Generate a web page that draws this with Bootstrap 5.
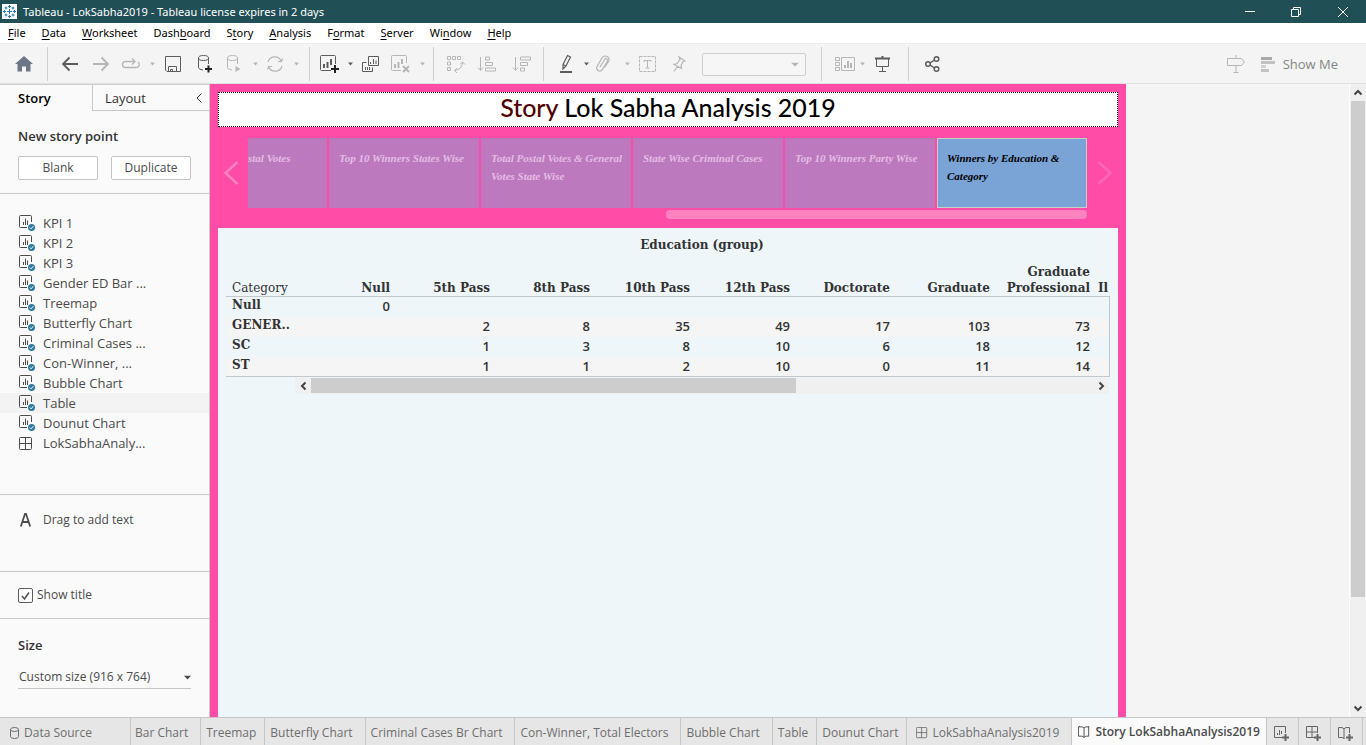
<!DOCTYPE html>
<html lang="en">
<head>
<meta charset="utf-8">
<meta name="viewport" content="width=device-width, initial-scale=1">
<title>Tableau - LokSabha2019</title>
<link rel="stylesheet" href="https://cdn.jsdelivr.net/npm/bootstrap@5.3.0/dist/css/bootstrap.min.css">
<style>
  body { font: 12px/16px "Open Sans", sans-serif; color: #4b4b4b; background: #f4f4f4; }
  svg { display: block; flex: none; overflow: visible; }
  .ln { fill: none; stroke: currentColor; }
  button { color: inherit; background: none; border: 0; padding: 0; }
  a { color: inherit; text-decoration: none; }

  .app-title { height: 23px; background: #205056; color: #fff; font: 11px/16px "Noto Sans", sans-serif; padding: 0 2px; gap: 6px; }
  .app-title button { width: 40px; height: 23px; display: flex; align-items: center; justify-content: center; }
  .app-title button:last-child { width: 42px; }
  .app-menu { height: 20px; background: #fff; color: #000; font: 11px/20px "Noto Sans", sans-serif; }
  .app-menu u { text-underline-offset: 2px; }

  .app-tools { height: 41px; border-bottom: 1px solid #e0e0e0; color: #5c5c5c; padding-top: 4px; padding-bottom: 3px; border-top: 1px solid #ededed; }
  .tool-group { height: 34px; display: flex; align-items: center; border-right: 1px solid #cfcfcf; padding: 0 6px; }
  .tool-wide { padding: 0 10px; }
  .tool-btn { width: 31px; height: 32px; display: flex; align-items: center; justify-content: center; }
  .tool-drop { width: 41px; height: 32px; display: flex; align-items: center; justify-content: space-between; padding: 0 2px 0 5px; }
  .tool-slim { width: 37px; }
  .tool-off { color: #b6b6b6; }
  .tool-select { width: 104px; height: 23px; border: 1px solid #cfcfcf; border-radius: 2px; background: #f6f6f6; appearance: none; }
  .fit-caret { margin: 0 12px 0 -15px; }
  .show-me { font-size: 13px; color: #858585; margin-right: 28px; }

  .side { width: 210px; background: #fafafa; border-right: 1px solid #c8c8c8; }
  .side-sect { border-bottom: 1px solid #c8c8c8; padding: 0 18px; }
  .side-new { padding-top: 17px; padding-bottom: 13px; }
  .side-tabs { height: 27px; font-size: 13px; color: #333; border-top: 1px solid #d0d0d0; }
  .side-tabs .tab-on { width: 92px; padding-left: 18px; font-weight: 600; color: #000; }
  .side-tabs .tab-off { border-left: 1px solid #c8c8c8; border-bottom: 1px solid #c8c8c8; padding: 0 7px 0 12px; }
  .side h2 { font-size: 13px; line-height: 16px; font-weight: 600; color: #333; margin: 0; }
  .side-btn { height: 24px; border: 1px solid #c4c4c4; border-radius: 2px; background: #fff; width: 80px; }
  .sheet-list { padding: 19px 0 41px; font-size: 13px; }
  .sheet-list a { height: 20px; padding-left: 19px; gap: 7px; display: flex; align-items: center; white-space: nowrap; }
  .sheet-list a.sheet-hot { background: #f3f3f3; }
  .side-text { height: 77px; padding: 17px 20px; gap: 11px; }
  .side-check { height: 47px; }
  .tick { appearance: none; width: 15px; height: 15px; margin: 0; border: 1px solid #5c5c5c; border-radius: 2px; background: #fff url("data:image/svg+xml,%3Csvg xmlns='http://www.w3.org/2000/svg' viewBox='0 0 13 13'%3E%3Cpath d='M3 7l2.5 3L10 3.500' fill='none' stroke='%23555' stroke-width='1.600'/%3E%3C/svg%3E"); }
  .side-size { padding: 18px 18px 0; }
  .size-select { width: 100%; height: 24px; border: 0; border-bottom: 1px solid #c4c4c4; background: none; appearance: none; color: inherit; font: inherit; padding: 0 0 0 1px; }

  .story { width: 916px; background: #ff4ca6; padding: 8px 8px 0; }
  .story-title { height: 35px; background: #fff; border: 1px dotted #000; color: #000; font: 500 25px/28px Lato, sans-serif; margin: 0; text-align: center; }
  .story-title span { color: #500000; }
  .points-nav { height: 101px; padding-top: 11px; }
  .points-arrow { width: 30px; height: 70px; color: #ff82c0; display: flex; align-items: center; justify-content: center; }
  .points-row { height: 71px; gap: 2px; margin-right: 1px; }
  .point { height: 70px; flex: 0 0 150px; background: #bd79bd; color: #e3bde3; font: italic bold 11px/18px "Liberation Serif", serif; padding: 11px 6px 11px 10px; text-align: left; }
  .point-cut { flex: 1 1 0; padding: 11px 0; }
  .point-on { background: #7aa3d6; border: 1px solid #c6cfc6; color: #000; padding: 10px 9px; }
  .points-bar { height: 9px; width: 421px; border-radius: 4px; background: #ff82c0; margin: 1px 1px 0 auto; }
  .view { background: #eef6fa; padding: 5px 8px 0; }

  .cross { table-layout: fixed; width: 100%; border-collapse: separate; border-spacing: 0; color: #333; font: bold 12px/16px "DejaVu Serif", serif; }
  .cross th, .cross td { padding: 0 4px; text-align: right; overflow: hidden; height: 20px; vertical-align: top; }
  .cross td { font: 600 13px/19px "Open Sans", sans-serif; }
  .cross thead th { vertical-align: bottom; }
  .cross .corner { font-weight: normal; }
  .cross .dim, .cross tbody th { text-align: left; padding-left: 6px; padding-right: 0; white-space: nowrap; }
  .cross thead .group-head { text-align: center; height: 16px; }
  .cross .col-heads th { height: 44px; border-bottom: 1px solid #c4c8ca; }
  .cross .name-col { width: 68px; }
  .cross .num-col { width: 100px; }
  .cross tbody tr:nth-child(even) { background: #f5f5f5; }
  .cross tbody td:last-child { border-right: 1px solid #c4c8ca; }
  .cross tbody tr:last-child > * { border-bottom: 1px solid #c4c8ca; }
  .cross-bar { margin: 1px 1px 0 69px; height: 16px; background: #f0f0f0; color: #444; }
  .cross-bar .grip { width: 485px; background: #cdcdcd; height: 15px; }
  .bar-end { width: 16px; height: 15px; display: flex; align-items: center; justify-content: center; }
  .page-bar { width: 17px; background: #f0f0f0; border-left: 1px solid #fff; color: #444; }
  .page-bar .grip { height: 496px; background: #cdcdcd; margin: 0 1px; }
  .page-bar .bar-end { height: 17px; }

  .sheet-tabs { height: 28px; background: #e6e6e6; border-top: 1px solid #c6c6c6; color: #6e6e6e; white-space: nowrap; }
  .sheet-tabs > * { display: flex; align-items: center; border-right: 1px solid #c6c6c6; padding: 3px 8px 0 5px; }
  .sheet-tabs .wide { padding: 3px 12px 0 5px; }
  .sheet-tabs .source { padding: 3px 38px 0 10px; gap: 5px; }
  .sheet-tabs .sheet-on { background: #fafafa; font-weight: 600; color: #4b4b4b; padding: 0 6px; gap: 4px; }
  .sheet-tabs .add { width: 32px; justify-content: center; padding: 4px 0 0; color: #666; }
</style>
</head>
<body class="vh-100 d-flex flex-column overflow-hidden">

<svg width="0" height="0" class="position-absolute" aria-hidden="true">
  <defs>
    <symbol id="sheet" viewBox="0 0 17 16"><path class="ln" d="M12.500 7V1.500q0-1-1-1h-10q-1 0-1 1v10q0 1 1 1H8M4.500 10V7M6.500 10V3.500M8.500 10V5.500"/><circle cx="12.500" cy="12.500" r="3.500" fill="#2f7a9e"/><path d="M10.800 12.500l1.300 1.300 2.200-2.600" fill="none" stroke="#fff"/></symbol>
    <symbol id="dash" viewBox="0 0 14 14"><path class="ln" d="M1.500.5h10q1 0 1 1v10q0 1-1 1h-10q-1 0-1-1v-10q0-1 1-1zM6.500.5v12M.5 6.500h12"/></symbol>
    <symbol id="book" viewBox="0 0 14 14"><path class="ln" d="M6.500 3q-.5-1.500-2-1.500h-3V.5M6.500 3Q7 1.500 8.500 1.500h3V.5M6.500 3v10M1.500 1.500h-1v10H4q2 0 2.500 1.500Q7 11.500 9 11.500h2.500v-10"/></symbol>
    <symbol id="caret" viewBox="0 0 5 4"><path d="M0 .5h5L2.500 3.500z" fill="currentColor"/></symbol>
  </defs>
</svg>

<header class="app-title d-flex align-items-center flex-shrink-0">
  <svg width="15" height="15" viewBox="0 0 15 15"><path d="M0 0h15v15H0z" fill="#fff"/><path d="M7.500 5v5M5 7.500h5M7.500 1v3M6 2.500h3M7.500 11v3M6 12.500h3M1 7.500h3M2.500 6v3M11 7.500h3M12.500 6v3M4 2.500v3M2.500 4h3M11 2.500v3M9.500 4h3M4 9.500v3M2.500 11h3M11 9.500v3M9.500 11h3" stroke="#2b7ba8" fill="none"/></svg>
  <span class="flex-grow-1">Tableau - LokSabha2019 - Tableau license expires in 2 days</span>
  <button aria-label="Minimize"><svg class="ln" width="10" height="10"><path d="M0 4.500h10"/></svg></button>
  <button aria-label="Restore"><svg class="ln" width="10" height="10"><path d="M.5 2.500h7v7h-7zM2.500 2V.5h7v7H8"/></svg></button>
  <button aria-label="Close"><svg class="ln" width="10" height="10"><path d="M0 0l10 10M10 0L0 10"/></svg></button>
</header>

<nav class="app-menu d-flex gap-3 px-2 flex-shrink-0">
  <a href="#"><u>F</u>ile</a><a href="#"><u>D</u>ata</a><a href="#"><u>W</u>orksheet</a><a href="#">Dash<u>b</u>oard</a><a href="#">S<u>t</u>ory</a><a href="#"><u>A</u>nalysis</a><a href="#">F<u>o</u>rmat</a><a href="#"><u>S</u>erver</a><a href="#">Wi<u>n</u>dow</a><a href="#"><u>H</u>elp</a>
</nav>

<div class="app-tools d-flex align-items-center flex-shrink-0" role="toolbar">
  <div class="tool-group px-2">
    <button class="tool-btn" aria-label="Home"><svg width="18" height="16"><path d="M9 0l9 8h-2.500v7.500h-4.500v-5H7v5H2.500V8H0z" fill="#6b7686"/></svg></button>
  </div>
  <div class="tool-group pe-2">
    <button class="tool-btn" aria-label="Back"><svg class="ln" width="16" height="14" stroke-width="1.800"><path d="M16 7H1M7.500.5L1 7l6.500 6.500"/></svg></button>
    <button class="tool-btn tool-off" aria-label="Forward"><svg class="ln" width="16" height="14" stroke-width="1.800"><path d="M0 7h15M8.500.5L15 7l-6.500 6.500"/></svg></button>
    <button class="tool-drop tool-off" aria-label="Redo"><svg class="ln" width="20" height="12" stroke-width="1.300"><path d="M14 3.500H4.500a3 3 0 000 6h11a3 3 0 001.500-5.500M11 .5l3 3-3 3"/></svg><svg width="5" height="4"><use href="#caret"/></svg></button>
    <button class="tool-btn" aria-label="Save"><svg class="ln" width="16" height="16"><path d="M.5.500h15v15H2L.5 14zM3.500 15.500v-5h8v5M5.500 15.500v-2h2v2"/></svg></button>
    <button class="tool-btn" aria-label="New data source"><svg class="ln" width="14" height="18"><ellipse cx="6.500" cy="3" rx="5" ry="2.500"/><path d="M1.500 3v9.500q0 2 4.500 2.500M11.500 3v6"/><path d="M11.500 10.500v7M8 14h7" stroke="#222" stroke-width="2"/></svg></button>
    <button class="tool-drop tool-off" aria-label="Pause updates"><svg class="ln" width="18" height="18"><ellipse cx="8.500" cy="3" rx="5" ry="2.500"/><path d="M3.500 3v9.500q0 2 4.500 2.500M13.500 3v6"/><path d="M11.500 11v6l5-3z" fill="currentColor" stroke="none"/></svg><svg width="5" height="4"><use href="#caret"/></svg></button>
    <button class="tool-drop tool-off" aria-label="Run update"><svg class="ln" width="18" height="16" stroke-width="1.200"><path d="M3 6a7 7 0 0113.500 0M17 10A7 7 0 013.500 10M13 5.500h3.500l1-3M7 10.500H3.500l-1 3"/></svg><svg width="5" height="4"><use href="#caret"/></svg></button>
  </div>
  <div class="tool-group ps-1">
    <button class="tool-drop" aria-label="New worksheet"><svg class="ln" width="19" height="18"><path d="M16.500 9V1.500q0-1-1-1h-13q-1 0-1 1v13q0 1 1 1H12"/><path d="M5 13v-4M8.500 13V7M12 10V4" stroke-width="2"/><path d="M16 10v8M12 14h8" stroke="#222" stroke-width="2"/></svg><svg width="5" height="4"><use href="#caret"/></svg></button>
    <button class="tool-btn" aria-label="Duplicate"><svg class="ln" width="17" height="16"><path d="M6.500.5h10v9h-10zM4.500 6.500h-4v9h10v-4M8.500 8V6M11.500 8V3M14 8V4.500M3.500 14v-3M5.500 14v-3M7.500 14v-3"/></svg></button>
    <button class="tool-drop tool-off" aria-label="Clear sheet"><svg class="ln" width="19" height="18"><path d="M15.500 8V1.500q0-1-1-1h-13q-1 0-1 1v13q0 1 1 1H10"/><path d="M4 13v-4M7.500 13V7M11 9V4" stroke-width="2"/><path d="M12 11l6 6M18 11l-6 6" stroke-width="2"/></svg><svg width="5" height="4"><use href="#caret"/></svg></button>
  </div>
  <div class="tool-group tool-off">
    <button class="tool-btn" aria-label="Swap rows and columns"><svg class="ln" width="18" height="17"><path d="M.5.500h3v3h-3zM5.500.500h3v3h-3zM10.500.500h3v3h-3zM.5 6h3v3h-3zM.5 11.500h3v3h-3zM15.500 6q0 7.500-8 8.500M13 8.500L15.500 6l2.500 2.500M10 12l-2.500 2.500L10 17"/></svg></button>
    <button class="tool-btn" aria-label="Sort ascending"><svg class="ln" width="18" height="16"><path d="M2.500 1v13M0 11.500l2.500 3 2.500-3M7.500 1h4v3h-4zM7.500 6.500h7v3h-7zM7.500 12h10v3h-10z"/></svg></button>
    <button class="tool-btn ms-1" aria-label="Sort descending"><svg class="ln" width="18" height="16"><path d="M2.500 1v13M0 11.500l2.500 3 2.500-3M7.500 1h10v3h-10zM7.500 6.500h7v3h-7zM7.500 12h4v3h-4z"/></svg></button>
  </div>
  <div class="tool-group tool-wide">
    <button class="tool-drop tool-slim" aria-label="Highlight"><svg class="ln" width="14" height="18"><path d="M4 9.500L8.500.5l3 1.500L7 11l-3 3zM4 9.500L7 11" stroke-width="1.200"/><path d="M1 17h12" stroke-width="2"/></svg><svg width="5" height="4"><use href="#caret"/></svg></button>
    <button class="tool-drop tool-off" aria-label="Group"><svg class="ln" width="14" height="16" stroke-width="1.200"><path d="M4 11l5-8q1-1.500 2 0t0 3l-5 8q-2 2-4 .5t-1-4l5-8.500q2-3 5-1.500t1.500 5l-4 6"/></svg><svg width="5" height="4"><use href="#caret"/></svg></button>
    <button class="tool-btn tool-off" aria-label="Show mark labels"><svg class="ln" width="17" height="16"><path d="M.5.500h16v15H.5z" stroke-dasharray="3 1"/><path d="M5 6V4.500h7V6M8.500 4.500v7.500M6.500 12h4"/></svg></button>
    <button class="tool-btn tool-off" aria-label="Fix axes"><svg class="ln" width="14" height="16" stroke-width="1.200"><path d="M7 1l6 4-2 .5-2 4 .5 3L2 8.500l3-1 3-4zM5.500 10.500L2 15.500"/></svg></button>
    <select class="tool-select ms-2" aria-label="Fit" disabled></select>
    <svg class="tool-off fit-caret" width="8" height="5" viewBox="0 0 5 4" preserveAspectRatio="none"><use href="#caret"/></svg>
  </div>
  <div class="tool-group tool-wide ps-2">
    <button class="tool-drop tool-slim tool-off" aria-label="Show cards"><svg class="ln" width="20" height="15"><path d="M.5.500h4v3h-4zM.5 5.500h4v3h-4zM.5 10.500h4v3h-4zM6.500.500h13v13h-13z"/><path d="M10 11V8M13 11V4M16 11V6" stroke-width="2"/></svg><svg width="5" height="4"><use href="#caret"/></svg></button>
    <button class="tool-btn" aria-label="Presentation mode"><svg class="ln" width="17" height="16"><path d="M1 2.500h15M8.500 0v2" stroke-width="2"/><path d="M2.500 3v7.500h12V3M8.500 10.500v5M5 15.500h7"/></svg></button>
  </div>
  <button class="tool-btn ms-2" aria-label="Share"><svg class="ln" width="15" height="16" stroke-width="1.500"><circle cx="3" cy="8" r="2.300"/><circle cx="11.500" cy="3" r="2.300"/><circle cx="11.500" cy="13" r="2.300"/><path d="M5 7l4.500-3M5 9l4.500 3"/></svg></button>
  <button class="ms-auto me-3 tool-off" aria-label="Guide"><svg class="ln" width="18" height="18"><path d="M.5 3.500h14l3 3.500-3 3.500H.5zM9 0v3.500M9 10.500v7M6.500 17.500h5"/></svg></button>
  <button class="show-me d-flex align-items-center gap-2"><svg width="14" height="15"><path d="M0 0h11v3H0z" fill="#a8a8a8"/><path d="M0 4h14v3H0zM0 12h8v3H0z" fill="#c2c2c2"/><path d="M0 8h5v3H0z" fill="#d2d2d2"/></svg>Show Me</button>
</div>

<main class="d-flex flex-grow-1 overflow-hidden">
  <aside class="side flex-shrink-0">
    <div class="side-tabs d-flex">
      <a href="#" class="tab-on d-flex align-items-center">Story</a>
      <a href="#" class="tab-off d-flex align-items-center justify-content-between flex-grow-1">Layout<svg class="ln" width="6" height="10"><path d="M5.500.500L1 5l4.500 4.500"/></svg></a>
    </div>
    <div class="side-sect side-new">
      <h2>New story point</h2>
      <div class="d-flex justify-content-between mt-2 pt-1">
        <button class="side-btn">Blank</button><button class="side-btn">Duplicate</button>
      </div>
    </div>
    <div class="sheet-list side-sect">
      <a href="#"><svg width="17" height="16"><use href="#sheet"/></svg>KPI 1</a>
      <a href="#"><svg width="17" height="16"><use href="#sheet"/></svg>KPI 2</a>
      <a href="#"><svg width="17" height="16"><use href="#sheet"/></svg>KPI 3</a>
      <a href="#"><svg width="17" height="16"><use href="#sheet"/></svg>Gender ED Bar ...</a>
      <a href="#"><svg width="17" height="16"><use href="#sheet"/></svg>Treemap</a>
      <a href="#"><svg width="17" height="16"><use href="#sheet"/></svg>Butterfly Chart</a>
      <a href="#"><svg width="17" height="16"><use href="#sheet"/></svg>Criminal Cases ...</a>
      <a href="#"><svg width="17" height="16"><use href="#sheet"/></svg>Con-Winner, ...</a>
      <a href="#"><svg width="17" height="16"><use href="#sheet"/></svg>Bubble Chart</a>
      <a href="#" class="sheet-hot"><svg width="17" height="16"><use href="#sheet"/></svg>Table</a>
      <a href="#"><svg width="17" height="16"><use href="#sheet"/></svg>Dounut Chart</a>
      <a href="#"><svg class="me-1" width="13" height="13" viewBox="0 0 13 13"><use href="#dash" width="14" height="14"/></svg>LokSabhaAnaly...</a>
    </div>
    <div class="side-sect side-text d-flex align-items-start">
      <svg class="ln" width="12" height="15" stroke-width="1.800"><path d="M.8 14.500L5 1.800h1l4.200 12.700M2.500 10h6"/></svg><span>Drag to add text</span>
    </div>
    <div class="side-sect side-check d-flex align-items-center">
      <input class="tick" type="checkbox" id="show-title" checked><label class="ms-1" for="show-title">Show title</label>
    </div>
    <div class="side-size">
      <h2><label for="size">Size</label></h2>
      <div class="position-relative mt-2 pt-1">
        <select class="size-select" id="size"><option>Custom size (916 x 764)</option></select>
        <svg class="position-absolute end-0 top-50" width="7" height="5" viewBox="0 0 5 4" preserveAspectRatio="none"><use href="#caret"/></svg>
      </div>
    </div>
  </aside>

  <section class="story flex-shrink-0 d-flex flex-column">
    <h1 class="story-title"><span>Story</span> Lok Sabha Analysis 2019</h1>
    <div class="points-nav d-flex">
      <button class="points-arrow pe-1" aria-label="Previous"><svg class="ln" width="14" height="24" stroke-width="2.500"><path d="M13.500 1L1.500 12l12 11"/></svg></button>
      <div class="flex-grow-1 overflow-hidden">
        <div class="points-row d-flex">
          <button class="point point-cut d-flex">stal Votes</button>
          <button class="point d-flex">Top 10 Winners States Wise</button>
          <button class="point d-flex">Total Postal Votes &amp; General Votes State Wise</button>
          <button class="point d-flex">State Wise Criminal Cases</button>
          <button class="point d-flex">Top 10 Winners Party Wise</button>
          <button class="point point-on d-flex">Winners by Education &amp; Category</button>
        </div>
        <div class="points-bar"></div>
      </div>
      <button class="points-arrow ps-1 opacity-50" aria-label="Next"><svg class="ln" width="14" height="24" stroke-width="2.500"><path d="M.5 1l12 11-12 11"/></svg></button>
    </div>
    <div class="view flex-grow-1">
      <table class="cross">
        <colgroup><col class="name-col"><col class="num-col" span="8"><col></colgroup>
        <thead>
          <tr><th></th><th class="group-head" colspan="9">Education (group)</th></tr>
          <tr class="col-heads"><th class="dim corner">Category</th><th>Null</th><th>5th Pass</th><th>8th Pass</th><th>10th Pass</th><th>12th Pass</th><th>Doctorate</th><th>Graduate</th><th>Graduate Professional</th><th class="text-start pe-0">Il</th></tr>
        </thead>
        <tbody>
          <tr><th>Null</th><td>0</td><td></td><td></td><td></td><td></td><td></td><td></td><td></td><td></td></tr>
          <tr><th>GENER..</th><td></td><td>2</td><td>8</td><td>35</td><td>49</td><td>17</td><td>103</td><td>73</td><td></td></tr>
          <tr><th>SC</th><td></td><td>1</td><td>3</td><td>8</td><td>10</td><td>6</td><td>18</td><td>12</td><td></td></tr>
          <tr><th>ST</th><td></td><td>1</td><td>1</td><td>2</td><td>10</td><td>0</td><td>11</td><td>14</td><td></td></tr>
        </tbody>
      </table>
      <div class="cross-bar d-flex">
        <button class="bar-end" aria-label="Scroll left"><svg class="ln" width="5" height="8" stroke-width="2"><path d="M4.500.500L1 4l3.500 3.500"/></svg></button>
        <div class="grip"></div>
        <button class="bar-end ms-auto" aria-label="Scroll right"><svg class="ln" width="5" height="8" stroke-width="2"><path d="M.5.500L4 4 .5 7.500"/></svg></button>
      </div>
    </div>
  </section>

  <div class="page-bar ms-auto d-flex flex-column">
    <button class="bar-end" aria-label="Scroll up"><svg class="ln" width="8" height="5" stroke-width="2"><path d="M.5 4.500L4 1l3.500 3.500"/></svg></button>
    <div class="grip"></div>
    <button class="bar-end mt-auto" aria-label="Scroll down"><svg class="ln" width="8" height="5" stroke-width="2"><path d="M.5.500L4 4 7.500.5"/></svg></button>
  </div>
</main>

<footer class="sheet-tabs d-flex flex-shrink-0">
  <a href="#" class="source"><svg class="ln" width="9" height="12"><ellipse cx="4.500" cy="2.500" rx="4" ry="2"/><path d="M.5 2.500v7q0 2 4 2t4-2v-7"/></svg>Data Source</a>
  <a href="#" class="wide ps-1">Bar Chart</a>
  <a href="#">Treemap</a>
  <a href="#" class="wide">Butterfly Chart</a>
  <a href="#" class="wide">Criminal Cases Br Chart</a>
  <a href="#" class="wide">Con-Winner, Total Electors</a>
  <a href="#" class="wide">Bubble Chart</a>
  <a href="#">Table</a>
  <a href="#">Dounut Chart</a>
  <a href="#" class="wide gap-1"><svg class="ms-1" width="12" height="12"><use href="#dash" width="12" height="12"/></svg>LokSabhaAnalysis2019</a>
  <a href="#" class="sheet-on"><svg width="13" height="14"><use href="#book"/></svg>Story LokSabhaAnalysis2019</a>
  <button class="add" aria-label="New worksheet"><svg class="ln" width="16" height="15"><path d="M11.500 7V.5H.5v11H8M3.500 9V7M5.500 9V4M7.500 8V5"/><path d="M11.500 8v7M8 11.500h7" stroke-width="2"/></svg></button>
  <button class="add" aria-label="New dashboard"><svg class="ln" width="16" height="15"><path d="M11.500 7V.5H.5v11H8M6 .5v11M.5 6h11"/><path d="M11.500 8v7M8 11.500h7" stroke-width="2"/></svg></button>
  <button class="add" aria-label="New story"><svg class="ln" width="16" height="15"><path d="M11.500 7V1.500H9q-2.500 0-3 1.500-.5-1.500-3-1.500H.5v10H4q2 0 2 1.500V3"/><path d="M11.500 8v7M8 11.500h7" stroke-width="2"/></svg></button>
</footer>

<script src="https://cdn.jsdelivr.net/npm/bootstrap@5.3.0/dist/js/bootstrap.bundle.min.js"></script>
</body>
</html>
